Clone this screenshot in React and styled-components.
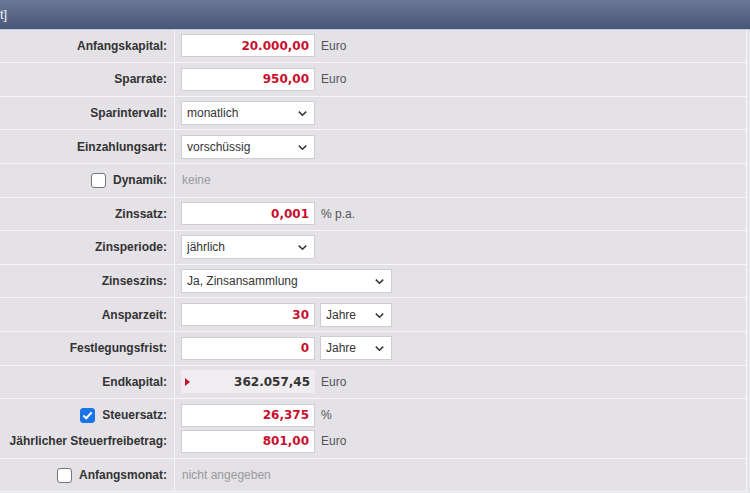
import React from "react";
import styled, { createGlobalStyle } from "styled-components";

const Global = createGlobalStyle`
  html, body { margin: 0; padding: 0; background: #e5e4e8; }
  body { font-family: "Liberation Sans", Arial, sans-serif; font-size: 12px; color: #333; }
`;

const Page = styled.div`
  width: 750px;
  height: 493px;
  overflow: hidden;
  background: #e5e4e8;
`;

const Header = styled.div`
  height: 28.6px;
  background: linear-gradient(#6b7794, #485678);
  border-bottom: 1px solid #c3c7d6;
  color: #eef0f6;
  font-size: 13px;
  display: flex;
  align-items: center;
  padding-left: 0;
`;

const Table = styled.div`
  width: 746px;
  border-right: 1px solid #f7f7f9;
  background: #e4e2e6;
`;

const Row = styled.div`
  display: grid;
  grid-template-columns: 175px 1fr;
  height: ${(p) => (p.$double ? "58.6px" : "32.6px")};
  border-bottom: 1px solid #f6f6f8;
`;

const LabelCell = styled.div`
  border-right: 1px solid #f6f6f8;
  padding-right: 7px;
  display: flex;
  flex-direction: column;
  justify-content: center;
  align-items: flex-end;
  gap: 3px;
`;

const LabelLine = styled.div`
  height: 23px;
  display: flex;
  align-items: center;
  gap: 7px;
`;

const Label = styled.span`
  font-weight: bold;
  color: #333;
  white-space: nowrap;
`;

const ValueCell = styled.div`
  padding-left: 6px;
  display: flex;
  flex-direction: column;
  justify-content: center;
  gap: 3px;
`;

const Line = styled.div`
  height: 23px;
  display: flex;
  align-items: center;
  gap: 5px;
`;

const NumInput = styled.input`
  box-sizing: border-box;
  width: 134px;
  height: 23px;
  border: 1px solid #cfcdd2;
  background: #fff;
  text-align: right;
  padding: 0 5px 0 4px;
  margin: 0;
  font-family: "DejaVu Sans", Verdana, sans-serif;
  font-weight: bold;
  font-size: 12px;
  color: #c8102e;
  outline: none;
`;

const Unit = styled.span`
  margin-left: 1px;
  color: ${(p) => (p.$muted ? "#9a999c" : "#555")};
  white-space: nowrap;
`;

const SelectWrap = styled.div`
  position: relative;
  width: ${(p) => p.$w}px;
  height: 24px;
`;

const Select = styled.select`
  appearance: none;
  -webkit-appearance: none;
  box-sizing: border-box;
  width: 100%;
  height: 100%;
  margin: 0;
  border: 1px solid #cfcdd2;
  background: #fff;
  border-radius: 0;
  padding: 0 20px 0 5px;
  font-family: "Liberation Sans", Arial, sans-serif;
  font-size: 12px;
  color: #333;
  outline: none;
`;

const Chevron = styled.svg`
  position: absolute;
  right: 8px;
  top: 10px;
  width: 9px;
  height: 5px;
  pointer-events: none;
`;

const ResultBox = styled.div`
  box-sizing: border-box;
  width: 134px;
  height: 23px;
  background: #efedf0;
  display: flex;
  align-items: center;
  justify-content: space-between;
  padding: 0 5px 0 4px;
`;

const Triangle = styled.span`
  width: 0;
  height: 0;
  border-top: 4px solid transparent;
  border-bottom: 4px solid transparent;
  border-left: 5px solid #c8102e;
`;

const ResultValue = styled.span`
  font-family: "DejaVu Sans", Verdana, sans-serif;
  font-weight: bold;
  font-size: 12px;
  color: #333;
`;

const Box = styled.span`
  box-sizing: border-box;
  width: 15px;
  height: 15px;
  border-radius: 3px;
  border: 1px solid ${(p) => (p.$checked ? "#1a73e8" : "#767676")};
  background: ${(p) => (p.$checked ? "#1a73e8" : "#fff")};
  display: flex;
  align-items: center;
  justify-content: center;
`;

function Check({ checked }) {
  return (
    <Box $checked={checked}>
      {checked && (
        <svg width="11" height="9" viewBox="0 0 11 9">
          <path d="M1.3 4.6 L4.2 7.3 L9.7 1.4" fill="none" stroke="#fff" strokeWidth="2" />
        </svg>
      )}
    </Box>
  );
}

function Dropdown({ w, value }) {
  return (
    <SelectWrap $w={w}>
      <Select defaultValue={value}>
        <option>{value}</option>
      </Select>
      <Chevron viewBox="0 0 9 5">
        <path d="M0.8 0.6 L4.5 4.2 L8.2 0.6" fill="none" stroke="#333" strokeWidth="1.5" />
      </Chevron>
    </SelectWrap>
  );
}

function SimpleRow({ label, check, children }) {
  return (
    <Row>
      <LabelCell>
        <LabelLine>
          {check !== undefined && <Check checked={check} />}
          <Label>{label}</Label>
        </LabelLine>
      </LabelCell>
      <ValueCell>
        <Line>{children}</Line>
      </ValueCell>
    </Row>
  );
}

export default function App() {
  return (
    <Page>
      <Global />
      <Header>t]</Header>
      <Table>
        <SimpleRow label="Anfangskapital:">
          <NumInput defaultValue="20.000,00" />
          <Unit>Euro</Unit>
        </SimpleRow>
        <SimpleRow label="Sparrate:">
          <NumInput defaultValue="950,00" />
          <Unit>Euro</Unit>
        </SimpleRow>
        <SimpleRow label="Sparintervall:">
          <Dropdown w={134} value="monatlich" />
        </SimpleRow>
        <SimpleRow label="Einzahlungsart:">
          <Dropdown w={134} value="vorschüssig" />
        </SimpleRow>
        <SimpleRow label="Dynamik:" check={false}>
          <Unit $muted>keine</Unit>
        </SimpleRow>
        <SimpleRow label="Zinssatz:">
          <NumInput defaultValue="0,001" />
          <Unit>% p.a.</Unit>
        </SimpleRow>
        <SimpleRow label="Zinsperiode:">
          <Dropdown w={134} value="jährlich" />
        </SimpleRow>
        <SimpleRow label="Zinseszins:">
          <Dropdown w={211} value="Ja, Zinsansammlung" />
        </SimpleRow>
        <SimpleRow label="Ansparzeit:">
          <NumInput defaultValue="30" />
          <Dropdown w={72} value="Jahre" />
        </SimpleRow>
        <SimpleRow label="Festlegungsfrist:">
          <NumInput defaultValue="0" />
          <Dropdown w={72} value="Jahre" />
        </SimpleRow>
        <SimpleRow label="Endkapital:">
          <ResultBox>
            <Triangle />
            <ResultValue>362.057,45</ResultValue>
          </ResultBox>
          <Unit>Euro</Unit>
        </SimpleRow>
        <Row $double>
          <LabelCell>
            <LabelLine>
              <Check checked />
              <Label>Steuersatz:</Label>
            </LabelLine>
            <LabelLine>
              <Label>Jährlicher Steuerfreibetrag:</Label>
            </LabelLine>
          </LabelCell>
          <ValueCell>
            <Line>
              <NumInput defaultValue="26,375" />
              <Unit>%</Unit>
            </Line>
            <Line>
              <NumInput defaultValue="801,00" />
              <Unit>Euro</Unit>
            </Line>
          </ValueCell>
        </Row>
        <SimpleRow label="Anfangsmonat:" check={false}>
          <Unit $muted>nicht angegeben</Unit>
        </SimpleRow>
      </Table>
    </Page>
  );
}
